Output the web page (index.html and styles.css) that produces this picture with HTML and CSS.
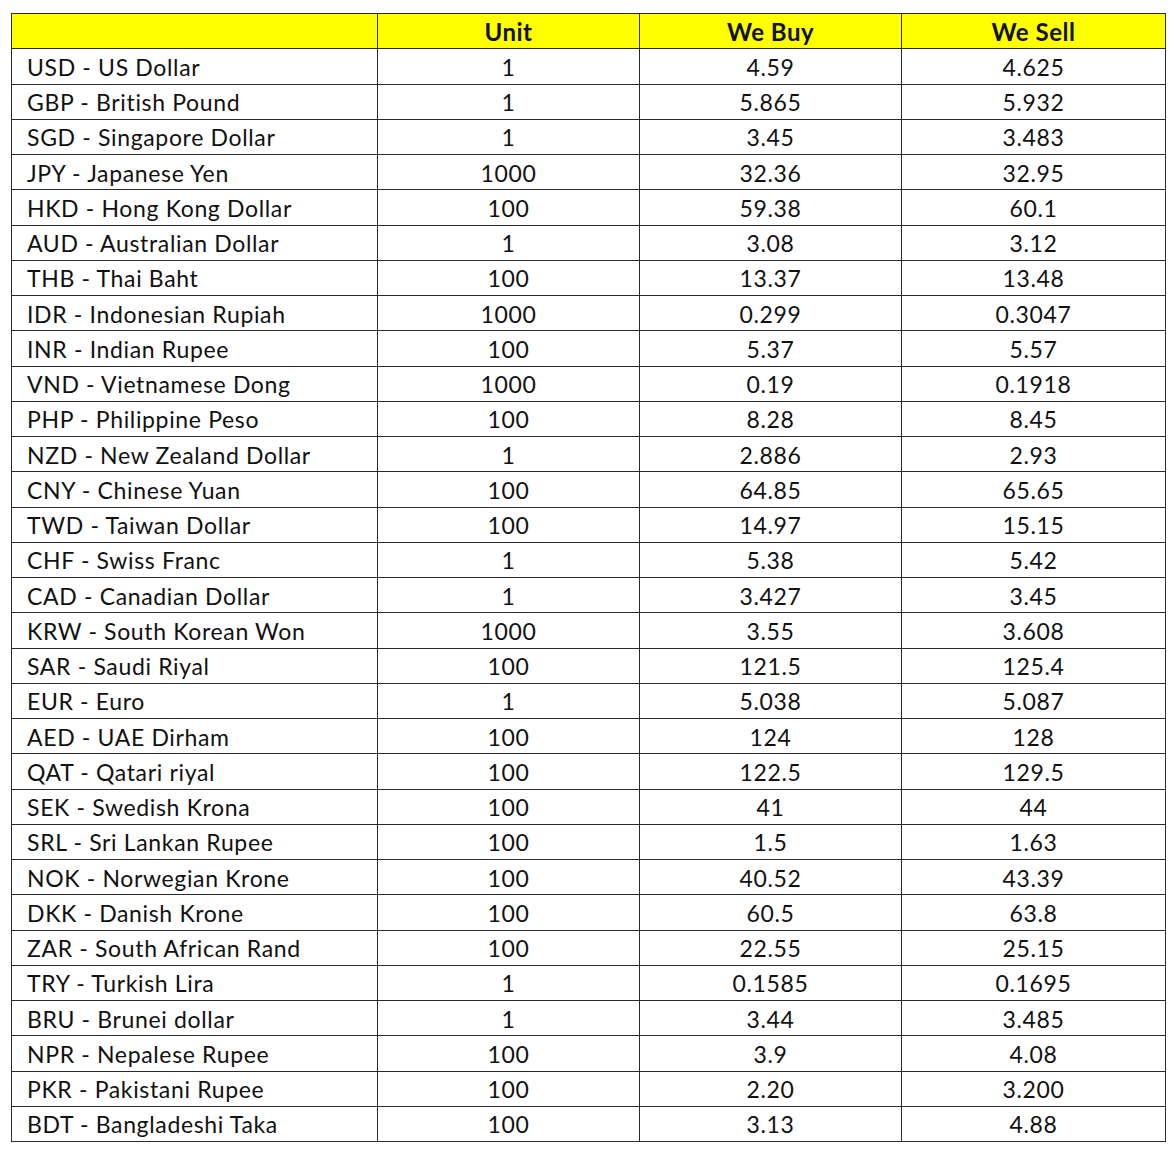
FILE: index.html
```html
<!DOCTYPE html>
<html>
<head>
<meta charset="utf-8">
<link rel="stylesheet" href="styles.css">
</head>
<body>
<table class="rates">
<thead>
<tr><th class="name"></th><th>Unit</th><th>We Buy</th><th>We Sell</th></tr>
</thead>
<tbody>
<tr><td class="name">USD - US Dollar</td><td>1</td><td>4.59</td><td>4.625</td></tr>
<tr><td class="name">GBP - British Pound</td><td>1</td><td>5.865</td><td>5.932</td></tr>
<tr><td class="name">SGD - Singapore Dollar</td><td>1</td><td>3.45</td><td>3.483</td></tr>
<tr><td class="name">JPY - Japanese Yen</td><td>1000</td><td>32.36</td><td>32.95</td></tr>
<tr><td class="name">HKD - Hong Kong Dollar</td><td>100</td><td>59.38</td><td>60.1</td></tr>
<tr><td class="name">AUD - Australian Dollar</td><td>1</td><td>3.08</td><td>3.12</td></tr>
<tr><td class="name">THB - Thai Baht</td><td>100</td><td>13.37</td><td>13.48</td></tr>
<tr><td class="name">IDR - Indonesian Rupiah</td><td>1000</td><td>0.299</td><td>0.3047</td></tr>
<tr><td class="name">INR - Indian Rupee</td><td>100</td><td>5.37</td><td>5.57</td></tr>
<tr><td class="name">VND - Vietnamese Dong</td><td>1000</td><td>0.19</td><td>0.1918</td></tr>
<tr><td class="name">PHP - Philippine Peso</td><td>100</td><td>8.28</td><td>8.45</td></tr>
<tr><td class="name">NZD - New Zealand Dollar</td><td>1</td><td>2.886</td><td>2.93</td></tr>
<tr><td class="name">CNY - Chinese Yuan</td><td>100</td><td>64.85</td><td>65.65</td></tr>
<tr><td class="name">TWD - Taiwan Dollar</td><td>100</td><td>14.97</td><td>15.15</td></tr>
<tr><td class="name">CHF - Swiss Franc</td><td>1</td><td>5.38</td><td>5.42</td></tr>
<tr><td class="name">CAD - Canadian Dollar</td><td>1</td><td>3.427</td><td>3.45</td></tr>
<tr><td class="name">KRW - South Korean Won</td><td>1000</td><td>3.55</td><td>3.608</td></tr>
<tr><td class="name">SAR - Saudi Riyal</td><td>100</td><td>121.5</td><td>125.4</td></tr>
<tr><td class="name">EUR - Euro</td><td>1</td><td>5.038</td><td>5.087</td></tr>
<tr><td class="name">AED - UAE Dirham</td><td>100</td><td>124</td><td>128</td></tr>
<tr><td class="name">QAT - Qatari riyal</td><td>100</td><td>122.5</td><td>129.5</td></tr>
<tr><td class="name">SEK - Swedish Krona</td><td>100</td><td>41</td><td>44</td></tr>
<tr><td class="name">SRL - Sri Lankan Rupee</td><td>100</td><td>1.5</td><td>1.63</td></tr>
<tr><td class="name">NOK - Norwegian Krone</td><td>100</td><td>40.52</td><td>43.39</td></tr>
<tr><td class="name">DKK - Danish Krone</td><td>100</td><td>60.5</td><td>63.8</td></tr>
<tr><td class="name">ZAR - South African Rand</td><td>100</td><td>22.55</td><td>25.15</td></tr>
<tr><td class="name">TRY - Turkish Lira</td><td>1</td><td>0.1585</td><td>0.1695</td></tr>
<tr><td class="name">BRU - Brunei dollar</td><td>1</td><td>3.44</td><td>3.485</td></tr>
<tr><td class="name">NPR - Nepalese Rupee</td><td>100</td><td>3.9</td><td>4.08</td></tr>
<tr><td class="name">PKR - Pakistani Rupee</td><td>100</td><td>2.20</td><td>3.200</td></tr>
<tr><td class="name">BDT - Bangladeshi Taka</td><td>100</td><td>3.13</td><td>4.88</td></tr>
</tbody>
</table>
</body>
</html>
```
FILE: styles.css
```css
html, body {
  margin: 0;
  padding: 0;
  background: #ffffff;
}
body {
  padding: 13px 0 0 11px;
  font-family: Lato, "Liberation Sans", sans-serif;
  color: #111;
}
.rates {
  border-collapse: collapse;
  table-layout: fixed;
  width: 1155px;
}
.rates th, .rates td {
  border: 1.5px solid #2a2a2a;
  height: 35.25px;
  padding: 2px 0 0 0;
  box-sizing: border-box;
  font-size: 23px;
  letter-spacing: 0.65px;
  text-align: center;
  line-height: 1;
  white-space: nowrap;
}
.rates th {
  background: #ffff00;
  font-weight: 700;
  font-size: 24px;
  letter-spacing: 0.5px;
}
.rates th.name, .rates td.name {
  width: 366px;
}
.rates th:nth-child(2), .rates th:nth-child(3) {
  width: 262px;
}
.rates td.name {
  text-align: left;
  padding-left: 15px;
}
```
